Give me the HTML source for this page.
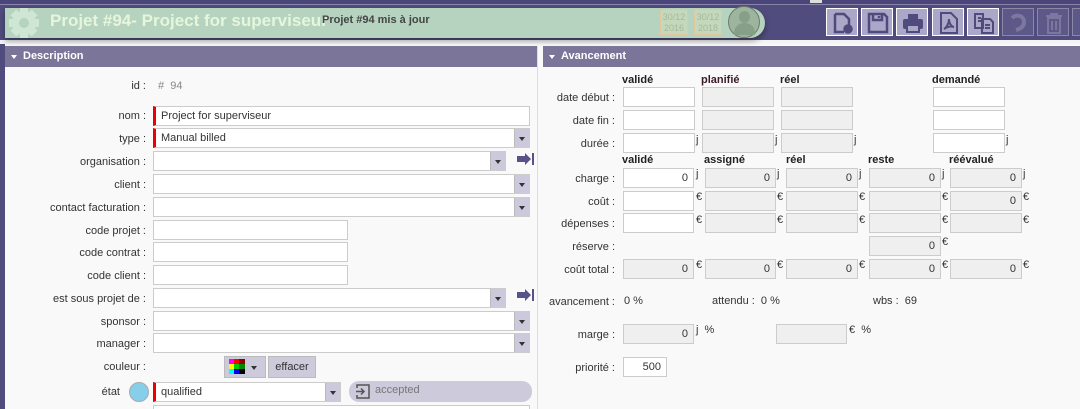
<!DOCTYPE html>
<html style="width:1080px;height:409px;overflow:hidden"><head><meta charset="utf-8"><style>
*{box-sizing:border-box;margin:0;padding:0}
html,body{overflow:hidden}
body{width:1080px;height:409px;overflow:hidden;background:#f9f9f9;font-family:"Liberation Sans","DejaVu Sans",sans-serif;font-size:11px;color:#333;position:relative}
.a{position:absolute}
.lbl{position:absolute;text-align:right;color:#333;white-space:nowrap}
.in{position:absolute;height:20px;background:#fff;border:1px solid #ccc;font-size:11px;padding:2px 5px;line-height:14px;white-space:nowrap;overflow:hidden}
.ro{background:#efefef}
.req{border-left:3px solid #e00}
.dd{position:absolute;top:-1px;right:-1px;width:16px;height:20px;background:#ccc9dc;border:1px solid #bbb}
.dd:after{content:"";position:absolute;left:4px;top:8px;border:3.5px solid transparent;border-top:4px solid #333}
.num{text-align:right}
.h{position:absolute;font-weight:bold;color:#222;font-size:11px}
.u{position:absolute;font-size:11px;color:#333}
.btn{position:absolute;top:8px;width:32px;height:28px;background:#aaa7c8;border:1px solid #fff}
.btn.dis{background:#5c5888;border-color:#8a87a8}
.btn svg{position:absolute;left:5px;top:3px}
.sec{position:absolute;top:46px;height:21px;background:#7a7599;color:#fff;font-weight:bold;font-size:11px;line-height:21px;padding-left:18px}
.sec:before{content:"";position:absolute;left:6px;top:9px;border:3px solid transparent;border-top:4px solid #fff}
</style></head><body>
<div class="a" style="left:0;top:0;width:1080px;height:44px;background:#504c7e"></div>
<div class="a" style="left:0;top:0;width:1080px;height:5px;background:#4a467a"></div>
<div class="a" style="left:0;top:4px;width:1080px;height:1px;background:#8985aa"></div>
<div class="a" style="left:0;top:40px;width:1080px;height:4px;background:#f4f4f4"></div>
<div class="a" style="left:0;top:44px;width:5px;height:365px;background:#504c7e"></div>
<div class="a" style="left:5px;top:8px;width:760px;height:30px;background:#b5d3bf;border-radius:0 15px 15px 0;box-shadow:0 3px 6px rgba(0,0,0,0.35)"></div>
<svg class="a" style="left:6px;top:6px" width="36" height="34" viewBox="0 0 36 34"><g fill="#cfe6d4"><circle cx="18" cy="17" r="12"/><rect x="14" y="2" width="8" height="30"/><rect x="3" y="13" width="30" height="8"/><rect x="14" y="2" width="8" height="30" transform="rotate(45 18 17)"/><rect x="14" y="2" width="8" height="30" transform="rotate(-45 18 17)"/></g><circle cx="18" cy="17" r="5" fill="#b5d3bf"/></svg>
<div class="a" style="left:50px;top:11px;font-size:17px;font-weight:bold;color:#e6f6dc;white-space:nowrap">Projet #94- Project for superviseur</div>
<div class="a" style="left:322px;top:14px;font-size:11px;font-weight:bold;color:#444">Projet #94 mis à jour</div>
<div class="a" style="left:660px;top:9px;width:28px;height:26px;border:1px solid #e4c79e;background:#c4d9bc;color:#a6b89c;font-size:9px;text-align:center;line-height:11px;padding-top:2px">30/12<br>2016</div>
<div class="a" style="left:694px;top:9px;width:28px;height:26px;border:1px solid #e4c79e;background:#c4d9bc;color:#a6b89c;font-size:9px;text-align:center;line-height:11px;padding-top:2px">30/12<br>2018</div>
<div class="a" style="left:728px;top:6px;width:32px;height:32px;border-radius:50%;background:#9db59f;border:1px solid #6c7a6c"></div>
<div class="a" style="left:739px;top:11px;width:11px;height:12px;border-radius:50%;background:#86a088"></div>
<div class="a" style="left:734px;top:23px;width:21px;height:12px;border-radius:10px 10px 0 0;background:#86a088"></div>
<div class="a" style="left:810px;top:0;width:12px;height:3px;background:#ddd"></div>
<div class="btn" style="left:826px"><svg width="22" height="22" viewBox="0 0 22 22" fill="none" stroke="#4f4b7c" stroke-width="2.5"><path d="M3 2h9l5 5v6M3 2v18h9"/><circle cx="16" cy="17" r="3.5" fill="#4f4b7c"/></svg></div>
<div class="btn" style="left:861px"><svg width="22" height="22" viewBox="0 0 22 22" fill="none" stroke="#4f4b7c" stroke-width="2.5"><path d="M2 2h15l3 3v15H2z"/><path d="M6 2v6h9V2M12 4v2"/></svg></div>
<div class="btn" style="left:896px"><svg width="22" height="22" viewBox="0 0 22 22"><rect x="6" y="2" width="10" height="5" fill="#4f4b7c"/><rect x="1" y="7" width="20" height="10" rx="2" fill="#4f4b7c"/><rect x="5" y="13" width="12" height="7" fill="#aaa7c8" stroke="#4f4b7c" stroke-width="2"/></svg></div>
<div class="btn" style="left:932px"><svg width="22" height="22" viewBox="0 0 22 22" fill="none" stroke="#4f4b7c" stroke-width="2"><path d="M3 1h10l6 6v14H3z"/><path d="M11 7c0 5-3 9-5 10m5-10c0 5 3 8 5 8m-10 2c3-2 7-3 10-2"/></svg></div>
<div class="btn" style="left:967px"><svg width="22" height="22" viewBox="0 0 22 22" fill="none" stroke="#4f4b7c" stroke-width="2"><path d="M2 2h8v14H2zM9 7h8l3 3v11H9z"/><path d="M12 13h5M12 16h5M5 6h3M5 9h3"/></svg></div>
<div class="btn dis" style="left:1002px"><svg width="22" height="22" viewBox="0 0 22 22" fill="none" stroke="#7b779f" stroke-width="4"><path d="M4 6c4-4 12-3 12 4 0 5-4 7-8 8"/></svg></div>
<div class="btn dis" style="left:1037px"><svg width="22" height="22" viewBox="0 0 22 22" fill="none" stroke="#7b779f" stroke-width="2"><path d="M3 4h16M8 4V2h6v2M5 6h12v15H5zM9 9v9M13 9v9"/></svg></div>
<div class="btn dis" style="left:1072px"></div>
<div class="sec" style="left:5px;width:532px">Description</div>
<div class="sec" style="left:543px;width:537px">Avancement</div>
<div class="a" style="left:537px;top:46px;width:6px;height:363px;background:#f9f9f9;border-left:1px solid #ddd"></div>
<div class="lbl" style="right:934px;top:80px">id :</div>
<div class="a" style="left:158px;top:80px;color:#888">#&nbsp; 94</div>
<div class="lbl" style="right:934px;top:110px">nom :</div><div class="in req" style="left:153px;top:106px;width:377px">Project for superviseur</div>
<div class="lbl" style="right:934px;top:133px">type :</div><div class="in req" style="left:153px;top:128px;width:377px">Manual billed<div class="dd"></div></div>
<div class="lbl" style="right:934px;top:156px">organisation :</div><div class="in" style="left:153px;top:151px;width:353px"><div class="dd"></div></div>
<svg class="a" style="left:517px;top:153px" width="18" height="12"><path d="M0 3h8V0l6 6-6 6V9H0z" fill="#57528a"/><rect x="15" y="0" width="2" height="12" fill="#57528a"/></svg>
<div class="lbl" style="right:934px;top:179px">client :</div><div class="in" style="left:153px;top:174px;width:377px"><div class="dd"></div></div>
<div class="lbl" style="right:934px;top:202px">contact facturation :</div><div class="in" style="left:153px;top:197px;width:377px"><div class="dd"></div></div>
<div class="lbl" style="right:934px;top:225px">code projet :</div><div class="in" style="left:153px;top:220px;width:195px"></div>
<div class="lbl" style="right:934px;top:247px">code contrat :</div><div class="in" style="left:153px;top:242px;width:195px"></div>
<div class="lbl" style="right:934px;top:270px">code client :</div><div class="in" style="left:153px;top:265px;width:195px"></div>
<div class="lbl" style="right:934px;top:293px">est sous projet de :</div><div class="in" style="left:153px;top:288px;width:353px"><div class="dd"></div></div>
<svg class="a" style="left:517px;top:289px" width="18" height="12"><path d="M0 3h8V0l6 6-6 6V9H0z" fill="#57528a"/><rect x="15" y="0" width="2" height="12" fill="#57528a"/></svg>
<div class="lbl" style="right:934px;top:316px">sponsor :</div><div class="in" style="left:153px;top:311px;width:377px"><div class="dd"></div></div>
<div class="lbl" style="right:934px;top:338px">manager :</div><div class="in" style="left:153px;top:333px;width:377px"><div class="dd"></div></div>
<div class="lbl" style="right:934px;top:361px">couleur :</div>
<div class="a" style="left:224px;top:356px;width:42px;height:22px;background:#cdcadc;border:1px solid #bbb"></div>
<svg class="a" style="left:229px;top:359px" width="16" height="15"><rect width="16" height="15" fill="#000"/><rect x="0" y="0" width="5" height="5" fill="#f0f"/><rect x="5" y="0" width="5" height="5" fill="#f00"/><rect x="10" y="0" width="6" height="5" fill="#800"/><rect x="0" y="5" width="5" height="5" fill="#ff0"/><rect x="5" y="5" width="5" height="5" fill="#0c0"/><rect x="10" y="5" width="6" height="5" fill="#080"/><rect x="0" y="10" width="5" height="5" fill="#0ff"/><rect x="5" y="10" width="5" height="5" fill="#00f"/></svg>
<div class="a" style="left:251px;top:366px;border:3.5px solid transparent;border-top:4px solid #333"></div>
<div class="a" style="left:268px;top:356px;width:48px;height:22px;background:#cdcadc;border:1px solid #bbb;text-align:center;line-height:20px;color:#333">effacer</div>
<div class="lbl" style="right:960px;top:386px">état</div>
<div class="a" style="left:129px;top:382px;width:20px;height:20px;border-radius:50%;background:#87ceeb;border:1px solid #aaa"></div>
<div class="in req" style="left:153px;top:382px;width:188px">qualified<div class="dd"></div></div>
<div class="a" style="left:349px;top:381px;width:183px;height:21px;border-radius:10px;background:#cdcadc"></div>
<svg class="a" style="left:355px;top:384px" width="16" height="15" fill="none" stroke="#555" stroke-width="1.5"><path d="M2 4V1h12v13H2v-3M1 7.5h8M6 4.5l3 3-3 3"/></svg>
<div class="a" style="left:375px;top:384px;color:#777">accepted</div>
<div class="in" style="left:153px;top:405px;width:377px;height:4px"></div>
<div class="h" style="left:622px;top:74px">validé</div><div class="h" style="left:701px;top:74px;color:#3a1a2a">planifié</div><div class="h" style="left:780px;top:74px">réel</div><div class="h" style="left:932px;top:74px">demandé</div>
<div class="lbl" style="right:465px;top:92px">date début :</div>
<div class="in" style="left:623px;top:87px;width:72px"></div><div class="in ro" style="left:702px;top:87px;width:72px"></div><div class="in ro" style="left:781px;top:87px;width:72px"></div><div class="in" style="left:933px;top:87px;width:72px"></div>
<div class="lbl" style="right:465px;top:115px">date fin :</div>
<div class="in" style="left:623px;top:110px;width:72px"></div><div class="in ro" style="left:702px;top:110px;width:72px"></div><div class="in ro" style="left:781px;top:110px;width:72px"></div><div class="in" style="left:933px;top:110px;width:72px"></div>
<div class="lbl" style="right:465px;top:138px">durée :</div>
<div class="in" style="left:623px;top:133px;width:72px"></div><div class="u" style="left:696px;top:134px">j</div><div class="in ro" style="left:702px;top:133px;width:72px"></div><div class="u" style="left:775px;top:134px">j</div><div class="in ro" style="left:781px;top:133px;width:72px"></div><div class="u" style="left:854px;top:134px">j</div><div class="in" style="left:933px;top:133px;width:72px"></div><div class="u" style="left:1006px;top:134px">j</div>
<div class="h" style="left:622px;top:154px">validé</div><div class="h" style="left:704px;top:154px">assigné</div><div class="h" style="left:786px;top:154px">réel</div><div class="h" style="left:868px;top:154px">reste</div><div class="h" style="left:949px;top:154px">réévalué</div>
<div class="lbl" style="right:465px;top:173px">charge :</div>
<div class="in num" style="left:623px;top:168px;width:71px">0</div><div class="u" style="left:696px;top:168px">j</div>
<div class="in ro num" style="left:705px;top:168px;width:71px">0</div><div class="u" style="left:777px;top:168px">j</div>
<div class="in ro num" style="left:786px;top:168px;width:72px">0</div><div class="u" style="left:859px;top:168px">j</div>
<div class="in ro num" style="left:869px;top:168px;width:72px">0</div><div class="u" style="left:942px;top:168px">j</div>
<div class="in ro num" style="left:950px;top:168px;width:72px">0</div><div class="u" style="left:1023px;top:168px">j</div>
<div class="lbl" style="right:465px;top:196px">coût :</div>
<div class="in" style="left:623px;top:191px;width:71px"></div><div class="u" style="left:696px;top:191px">€</div>
<div class="in ro" style="left:705px;top:191px;width:71px"></div><div class="u" style="left:777px;top:191px">€</div>
<div class="in ro" style="left:786px;top:191px;width:72px"></div><div class="u" style="left:859px;top:191px">€</div>
<div class="in ro" style="left:869px;top:191px;width:72px"></div><div class="u" style="left:942px;top:191px">€</div>
<div class="in ro num" style="left:950px;top:191px;width:72px">0</div><div class="u" style="left:1023px;top:191px">€</div>
<div class="lbl" style="right:465px;top:218px">dépenses :</div>
<div class="in" style="left:623px;top:213px;width:71px"></div><div class="u" style="left:696px;top:214px">€</div>
<div class="in ro" style="left:705px;top:213px;width:71px"></div><div class="u" style="left:777px;top:214px">€</div>
<div class="in ro" style="left:786px;top:213px;width:72px"></div><div class="u" style="left:859px;top:214px">€</div>
<div class="in ro" style="left:869px;top:213px;width:72px"></div><div class="u" style="left:942px;top:214px">€</div>
<div class="in ro" style="left:950px;top:213px;width:72px"></div><div class="u" style="left:1023px;top:214px">€</div>
<div class="lbl" style="right:465px;top:241px">réserve :</div>
<div class="in ro num" style="left:869px;top:236px;width:72px">0</div><div class="u" style="left:942px;top:236px">€</div>
<div class="lbl" style="right:465px;top:264px">coût total :</div>
<div class="in ro num" style="left:623px;top:259px;width:71px">0</div><div class="u" style="left:696px;top:259px">€</div>
<div class="in ro num" style="left:705px;top:259px;width:71px">0</div><div class="u" style="left:777px;top:259px">€</div>
<div class="in ro num" style="left:786px;top:259px;width:72px">0</div><div class="u" style="left:859px;top:259px">€</div>
<div class="in ro num" style="left:869px;top:259px;width:72px">0</div><div class="u" style="left:942px;top:259px">€</div>
<div class="in ro num" style="left:950px;top:259px;width:72px">0</div><div class="u" style="left:1023px;top:259px">€</div>
<div class="lbl" style="right:465px;top:296px">avancement :</div><div class="u" style="left:624px;top:295px">0 %</div>
<div class="u" style="left:712px;top:295px">attendu :&nbsp; 0 %</div>
<div class="u" style="left:873px;top:295px">wbs :&nbsp; 69</div>
<div class="lbl" style="right:465px;top:329px">marge :</div>
<div class="in ro num" style="left:623px;top:324px;width:71px">0</div><div class="u" style="left:696px;top:324px">j&nbsp; %</div>
<div class="in ro" style="left:776px;top:324px;width:71px"></div><div class="u" style="left:849px;top:324px">€&nbsp; %</div>
<div class="lbl" style="right:465px;top:362px">priorité :</div>
<div class="in num" style="left:623px;top:357px;width:44px">500</div>
</body></html>
